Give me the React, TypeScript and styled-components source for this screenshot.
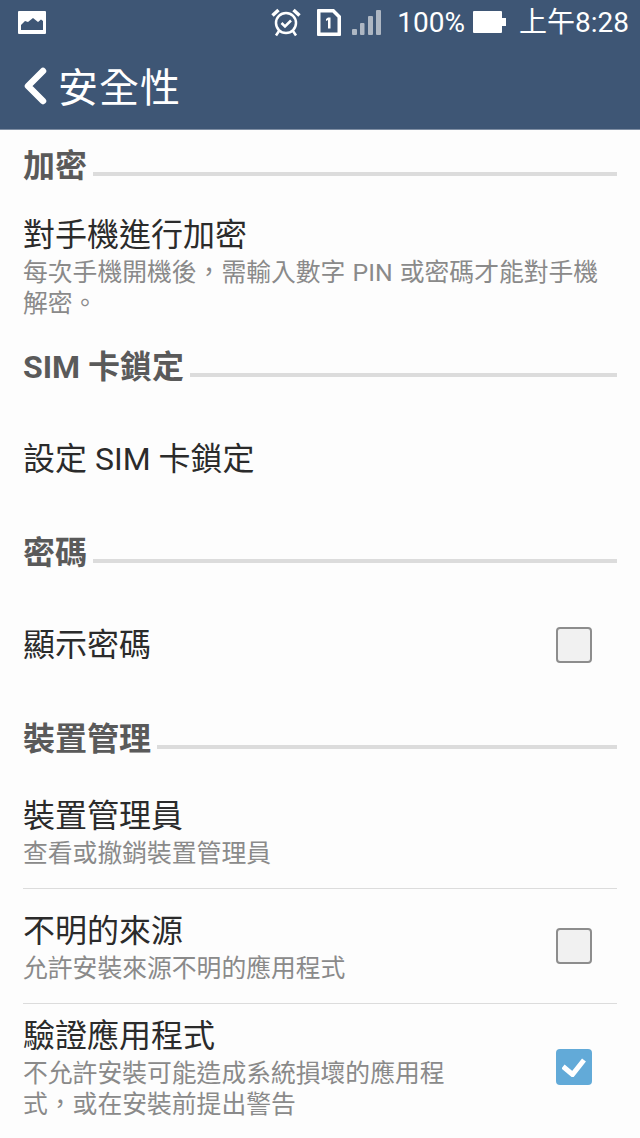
import React from "react";
import styled, { createGlobalStyle } from "styled-components";

const Global = createGlobalStyle`
  html, body {
    margin: 0;
    padding: 0;
    background: #fdfdfd;
  }
  body {
    font-family: "Roboto", "Noto Sans CJK TC", sans-serif;
  }
`;

const Page = styled.div`
  width: 640px;
  height: 1138px;
  overflow: hidden;
  background: #fdfdfd;
`;

const Header = styled.header`
  height: 129px;
  background: #3e5675;
  border-bottom: 1px solid #7f8ea3;
`;

const StatusBar = styled.div`
  height: 44px;
  display: flex;
  align-items: center;
  padding: 0 11px 0 18px;
  color: #fff;
  font-size: 28px;
`;

const StatusRight = styled.div`
  margin-left: auto;
  display: flex;
  align-items: center;
`;

const StatusIcon = styled.span<{ $left: number }>`
  display: flex;
  margin-left: ${(p) => p.$left}px;
`;

const StatusText = styled.span<{ $left: number }>`
  margin: 1px 0 0 ${(p) => p.$left}px;
  line-height: 44px;
  white-space: nowrap;
`;

const TitleRow = styled.div`
  height: 84px;
  display: flex;
  align-items: center;
  padding-left: 23px;
`;

const Title = styled.h1`
  margin: -2px 0 0 11px;
  font-size: 40px;
  font-weight: 400;
  letter-spacing: 1px;
  color: #fff;
`;

const SectionHead = styled.div<{ $gap: number }>`
  height: 56px;
  margin-top: ${(p) => p.$gap}px;
  display: flex;
  align-items: flex-start;
  padding: 0 23px;
`;

const SectionLabel = styled.h2`
  margin: 0;
  font-size: 32px;
  line-height: 42px;
  font-weight: 700;
  color: #5a5a5a;
  white-space: nowrap;
`;

const SectionLine = styled.div`
  flex: 1;
  height: 4px;
  margin: 27px 0 0 6px;
  background: #dcdcdc;
`;

const Row = styled.div<{ $height: number; $divider?: boolean }>`
  height: ${(p) => p.$height}px;
  margin: 0 23px;
  display: flex;
  align-items: center;
  justify-content: space-between;
  border-bottom: ${(p) => (p.$divider ? "1px solid #dcdcdc" : "none")};
  box-sizing: border-box;
`;

const RowText = styled.div<{ $width?: number }>`
  display: flex;
  flex-direction: column;
  width: ${(p) => (p.$width ? `${p.$width}px` : "auto")};
`;

const RowTitle = styled.div`
  font-size: 32px;
  line-height: 44px;
  color: #2b2b2b;
`;

const RowHint = styled.div`
  font-size: 24.8px;
  line-height: 31px;
  word-spacing: 1px;
  color: #8a8a8a;
`;

const Check = styled.div<{ $on?: boolean }>`
  flex: none;
  width: 36px;
  height: 36px;
  margin-right: 25px;
  box-sizing: border-box;
  border-radius: 4px;
  display: flex;
  align-items: center;
  justify-content: center;
  background: ${(p) => (p.$on ? "#62aad8" : "#f1f1f1")};
  border: ${(p) => (p.$on ? "none" : "2px solid #8d8d8d")};
`;

const PictureIcon = () => (
  <svg width="28" height="23" viewBox="0 0 28 23">
    <path
      fillRule="evenodd"
      fill="#fff"
      d="M1 0h26a1 1 0 0 1 1 1v21a1 1 0 0 1-1 1H1a1 1 0 0 1-1-1V1a1 1 0 0 1 1-1zM3 19h22v-9l-2-1.500-3 2.500-5-4-5 4-3-1-4 4z"
    />
  </svg>
);

const AlarmIcon = () => (
  <svg width="30" height="29" viewBox="0 0 30 29" fill="none" stroke="#fff">
    <circle cx="15" cy="15" r="10" strokeWidth="2.500" />
    <path d="M10.500 15l3.500 3.500 6-6" strokeWidth="2.500" />
    <path d="M8 23l-3 4.500M22 23l3 4.500" strokeWidth="2.500" />
    <path d="M1.500 7.500L7.500 2M28.500 7.500L22.500 2" strokeWidth="3.500" />
  </svg>
);

const SimIcon = () => (
  <svg width="24" height="27" viewBox="0 0 24 27">
    <path
      fillRule="evenodd"
      fill="#fff"
      d="M1 0h16l7 7v19a1 1 0 0 1-1 1H1a1 1 0 0 1-1-1V1a1 1 0 0 1 1-1zM3.500 3.500v20h17V8.500l-5-5z"
    />
    <path fill="#fff" d="M11 8.500h2.500v11H11v-8.500l-2 1v-2z" />
  </svg>
);

const SignalIcon = () => (
  <svg width="29" height="25" viewBox="0 0 29 25" fill="#aeb7c3">
    <rect x="0" y="19" width="5" height="6" rx="1" />
    <rect x="8" y="13" width="4.500" height="12" rx="1" />
    <rect x="16" y="6" width="5" height="19" rx="1" />
    <rect x="24" y="0" width="5" height="25" rx="1" />
  </svg>
);

const BatteryIcon = () => (
  <svg width="33" height="22" viewBox="0 0 33 22" fill="#fff">
    <path d="M1 0h27a1 1 0 0 1 1 1v6h4v8h-4v6a1 1 0 0 1-1 1H1a1 1 0 0 1-1-1V1a1 1 0 0 1 1-1z" />
  </svg>
);

const BackIcon = () => (
  <svg width="24" height="38" viewBox="0 0 24 38" fill="none">
    <path d="M20 4L5 19l15 15" stroke="#fff" strokeWidth="6.500" strokeLinecap="round" strokeLinejoin="round" />
  </svg>
);

const CheckMark = () => (
  <svg width="24" height="20" viewBox="0 0 24 20" fill="none">
    <path d="M1 9.500l9.500 8L22 3" stroke="#fff" strokeWidth="5" />
  </svg>
);

const Section = ({ label, gap }: { label: string; gap: number }) => (
  <SectionHead $gap={gap}>
    <SectionLabel>{label}</SectionLabel>
    <SectionLine />
  </SectionHead>
);

export default function App() {
  return (
    <Page lang="zh-Hant">
      <Global />
      <Header>
        <StatusBar>
          <PictureIcon />
          <StatusRight>
            <AlarmIcon />
            <StatusIcon $left={16}>
              <SimIcon />
            </StatusIcon>
            <StatusIcon $left={11}>
              <SignalIcon />
            </StatusIcon>
            <StatusText $left={16}>100%</StatusText>
            <StatusIcon $left={8}>
              <BatteryIcon />
            </StatusIcon>
            <StatusText $left={13}>上午8:28</StatusText>
          </StatusRight>
        </StatusBar>
        <TitleRow>
          <BackIcon />
          <Title>安全性</Title>
        </TitleRow>
      </Header>

      <Section label="加密" gap={15} />
      <Row $height={129}>
        <RowText $width={594}>
          <RowTitle>對手機進行加密</RowTitle>
          <RowHint>每次手機開機後，需輸入數字 PIN 或密碼才能對手機解密。</RowHint>
        </RowText>
      </Row>
      <Section label="SIM 卡鎖定" gap={16} />
      <Row $height={114}>
        <RowTitle>設定 SIM 卡鎖定</RowTitle>
      </Row>
      <Section label="密碼" gap={16} />
      <Row $height={114}>
        <RowTitle>顯示密碼</RowTitle>
        <Check />
      </Row>
      <Section label="裝置管理" gap={16} />
      <Row $height={115} $divider>
        <RowText>
          <RowTitle>裝置管理員</RowTitle>
          <RowHint>查看或撤銷裝置管理員</RowHint>
        </RowText>
      </Row>
      <Row $height={115} $divider>
        <RowText>
          <RowTitle>不明的來源</RowTitle>
          <RowHint>允許安裝來源不明的應用程式</RowHint>
        </RowText>
        <Check />
      </Row>
      <Row $height={126}>
        <RowText $width={432}>
          <RowTitle>驗證應用程式</RowTitle>
          <RowHint>不允許安裝可能造成系統損壞的應用程式，或在安裝前提出警告</RowHint>
        </RowText>
        <Check $on>
          <CheckMark />
        </Check>
      </Row>
    </Page>
  );
}
